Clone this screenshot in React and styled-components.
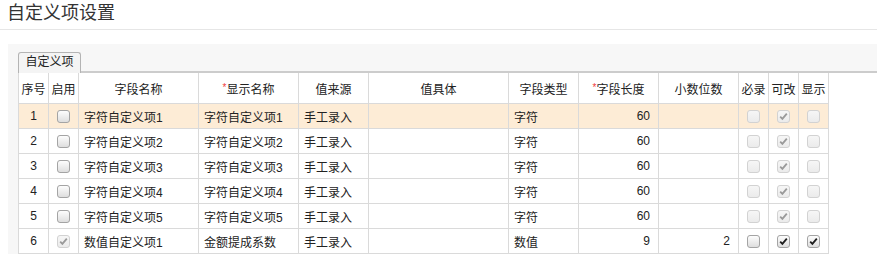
import styled, { createGlobalStyle } from "styled-components";

const GlobalStyle = createGlobalStyle`
  body {
    margin: 0;
    background: #fff;
    font-family: "Liberation Sans", "Noto Sans CJK SC", sans-serif;
    color: #333;
  }
`;

const Page = styled.div`
  width: 877px;
`;

const TitleBar = styled.div`
  height: 29px;
  padding-left: 7px;
  border-bottom: 1px solid #e6e6e6;
  font-size: 18px;
  line-height: 26px;
  color: #333;
`;

const Panel = styled.div`
  margin: 14px 0 0 8px;
  padding: 8px 0 0 10px;
  background: #f7f7f7;
`;

const Content = styled.div`
  background: #fff;
`;

const TabBar = styled.div`
  display: flex;
  height: 19px;
  background: #f7f7f7;
  border-bottom: 2px solid #cccccc;
`;

const Tab = styled.div`
  box-sizing: border-box;
  width: 63px;
  height: 21px;
  margin-bottom: -2px;
  border: 1px solid #b4b4b4;
  border-bottom: none;
  border-radius: 3px 3px 0 0;
  background: #f4f4f4;
  font-size: 12px;
  line-height: 19px;
  text-align: center;
  color: #222;
`;

const Table = styled.table`
  border-collapse: collapse;
  table-layout: fixed;
  width: 811px;
  font-size: 12px;
  color: #222;
`;

const Th = styled.th`
  height: 30px;
  padding: 0;
  border: 1px solid #dadada;
  border-top: none;
  font-weight: normal;
  text-align: center;
  white-space: nowrap;
  overflow: hidden;
`;

const Required = styled.span`
  color: #f04040;
  font-size: 10px;
  vertical-align: 3px;
`;

const Row = styled.tr`
  background: ${(p) => (p.$active ? "#fdecd6" : "#fff")};
`;

const Td = styled.td`
  height: 24px;
  padding: 0 ${(p) => (p.$align === "right" ? "8px" : "5px")};
  border: 1px solid #dadada;
  text-align: ${(p) => p.$align || "left"};
  white-space: nowrap;
  overflow: hidden;
`;

const Box = styled.span`
  display: inline-flex;
  align-items: center;
  justify-content: center;
  width: 13px;
  height: 13px;
  box-sizing: border-box;
  border-radius: 3px;
  vertical-align: middle;
  border: 1px solid ${(p) => (p.$disabled ? "#d2d2d2" : "#a4a4a4")};
  background: ${(p) =>
    p.$disabled
      ? "linear-gradient(#f6f6f6, #ebebeb)"
      : "linear-gradient(#fdfdfd, #dedede)"};

  svg {
    display: block;
  }
`;

const Check = ({ checked, disabled }) => (
  <Box $disabled={disabled}>
    {checked && (
      <svg width="9" height="9" viewBox="0 0 9 9">
        <path
          d="M1.2 4.6 L3.4 6.9 L7.8 1.6"
          fill="none"
          stroke={disabled ? "#9a9a9a" : "#1e1e1e"}
          strokeWidth="1.8"
        />
      </svg>
    )}
  </Box>
);

const widths = [30, 30, 120, 100, 70, 140, 70, 80, 80, 30, 30, 30];

const rows = [
  { name: "字符自定义项1", label: "字符自定义项1", type: "字符", len: 60 },
  { name: "字符自定义项2", label: "字符自定义项2", type: "字符", len: 60 },
  { name: "字符自定义项3", label: "字符自定义项3", type: "字符", len: 60 },
  { name: "字符自定义项4", label: "字符自定义项4", type: "字符", len: 60 },
  { name: "字符自定义项5", label: "字符自定义项5", type: "字符", len: 60 },
  {
    name: "数值自定义项1",
    label: "金额提成系数",
    type: "数值",
    len: 9,
    digits: 2,
    numeric: true,
  },
];

export default function App() {
  return (
    <Page>
      <GlobalStyle />
      <TitleBar>自定义项设置</TitleBar>
      <Panel>
        <Content>
          <TabBar>
            <Tab>自定义项</Tab>
          </TabBar>
          <Table>
            <colgroup>
              {widths.map((w, i) => (
                <col key={i} style={{ width: w }} />
              ))}
            </colgroup>
            <thead>
              <tr>
                <Th>序号</Th>
                <Th>启用</Th>
                <Th>字段名称</Th>
                <Th>
                  <Required>*</Required>显示名称
                </Th>
                <Th>值来源</Th>
                <Th>值具体</Th>
                <Th>字段类型</Th>
                <Th>
                  <Required>*</Required>字段长度
                </Th>
                <Th>小数位数</Th>
                <Th>必录</Th>
                <Th>可改</Th>
                <Th>显示</Th>
              </tr>
            </thead>
            <tbody>
              {rows.map((r, i) => (
                <Row key={i} $active={i === 0}>
                  <Td $align="center">{i + 1}</Td>
                  <Td $align="center">
                    <Check checked={r.numeric} disabled={r.numeric} />
                  </Td>
                  <Td>{r.name}</Td>
                  <Td>{r.label}</Td>
                  <Td>手工录入</Td>
                  <Td />
                  <Td>{r.type}</Td>
                  <Td $align="right">{r.len}</Td>
                  <Td $align="right">{r.digits}</Td>
                  <Td $align="center">
                    <Check disabled={!r.numeric} />
                  </Td>
                  <Td $align="center">
                    <Check checked disabled={!r.numeric} />
                  </Td>
                  <Td $align="center">
                    <Check checked={r.numeric} disabled={!r.numeric} />
                  </Td>
                </Row>
              ))}
            </tbody>
          </Table>
        </Content>
      </Panel>
    </Page>
  );
}
